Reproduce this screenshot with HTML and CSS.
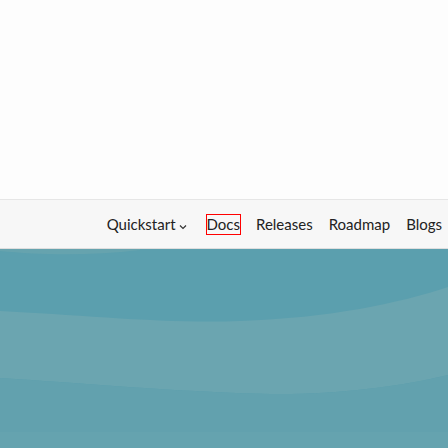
FILE: index.html
```html
<!DOCTYPE html>
<html>
<head>
<meta charset="utf-8">
<link rel="stylesheet" href="styles.css">
</head>
<body>
<div class="top"></div>
<nav class="nav">
  <a class="item">Quickstart<svg class="chev" width="8" height="6" viewBox="0 0 8 6"><path d="M1 1.5 L4 4.5 L7 1.5" fill="none" stroke="#333" stroke-width="1.2"/></svg></a>
  <a class="item docs">Docs</a>
  <a class="item">Releases</a>
  <a class="item">Roadmap</a>
  <a class="item">Blogs</a>
</nav>
<section class="hero">
  <svg class="waves" width="448" height="199" viewBox="0 0 448 199" preserveAspectRatio="none">
    <rect x="0" y="0" width="448" height="199" fill="#5b9fae"/>
    <path d="M0 0 L0 2 C40 6 90 7 140 1 L140 0 Z" fill="#66a3ae"/>
    <path d="M0 62 C80 66 170 75 240 72 C330 69 400 54 448 38 L448 126 C400 138 330 146 270 145 C180 143 80 134 0 129 Z" fill="#6ba5b0"/>
    <path d="M0 129 C80 134 180 143 270 145 C330 146 400 138 448 126 L448 199 L0 199 Z" fill="#62a1ae"/>
    <path d="M0 183 L448 183 L448 199 L0 199 Z" fill="#65a3af"/>
  </svg>
</section>
</body>
</html>
```

FILE: styles.css
```css
html, body {
  margin: 0;
  padding: 0;
  background: #fdfdfd;
}
body {
  width: 448px;
  height: 448px;
  overflow: hidden;
  font-family: Lato, "Open Sans", sans-serif;
}
.top {
  height: 199px;
  border-bottom: 1px solid #e6e6e6;
}
.nav {
  height: 48px;
  background: #f7f7f7;
  border-bottom: 1px solid #dedede;
  display: flex;
  justify-content: flex-end;
  align-items: center;
  gap: 16px;
  padding-right: 6px;
}
.item {
  font-size: 15px;
  color: #222;
  display: flex;
  align-items: center;
  line-height: 17px;
}
.chev {
  margin-left: 3px;
  margin-top: 5px;
}
.docs {
  outline: 1px solid #ff0000;
  padding: 1px 0;
  margin-left: 4px;
}
.hero {
  height: 199px;
}
.waves {
  display: block;
}
```
